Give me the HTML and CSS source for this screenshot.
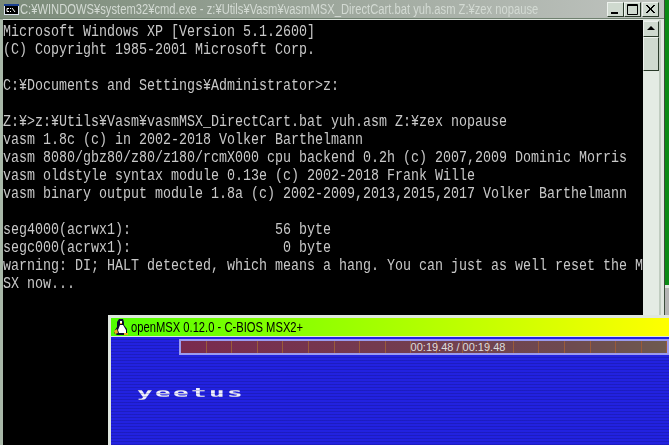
FILE: index.html
```html
<!DOCTYPE html>
<html lang="en">
<head>
<meta charset="utf-8">
<title>cmd and openMSX</title>
<link rel="stylesheet" href="styles.css">
</head>
<body>
<div class="desk">
  <div class="cmd">
    <div class="titlebar">
      <svg class="cmd-icon" width="15" height="11" viewBox="0 0 15 11"><rect width="15" height="11" fill="#dfe6f0"/><rect x="0" y="0" width="15" height="2" fill="#1a3f8f"/><rect x="1" y="2" width="13" height="8" fill="#000"/><path d="M3 4.500h2M3 4.500v3M3 7.500h2M6.500 4v1M6.500 7v1M8 4l3 4" stroke="#fff" fill="none"/></svg>
      <div class="title-text"><span class="title-inner">C:¥WINDOWS¥system32¥cmd.exe - z:¥Utils¥Vasm¥vasmMSX_DirectCart.bat yuh.asm Z:¥zex nopause</span></div>
      <div class="caption-btns">
        <div class="cbtn"><svg width="15" height="13" viewBox="0 0 15 13"><rect x="3" y="9" width="7" height="2" fill="#000"/></svg></div>
        <div class="cbtn"><svg width="15" height="13" viewBox="0 0 15 13"><path d="M2.500 1.500h10v10h-10z M2.500 2.500h10" fill="none" stroke="#000"/></svg></div>
        <div class="cbtn cbtn-close"><svg width="15" height="13" viewBox="0 0 15 13"><path d="M3 2l8 8M4 2l8 8M11 2l-8 8M12 2l-8 8" fill="none" stroke="#000"/></svg></div>
      </div>
    </div>
    <div class="client">
      <div class="console-clip">
      <pre class="console">Microsoft Windows XP [Version 5.1.2600]
(C) Copyright 1985-2001 Microsoft Corp.

C:¥Documents and Settings¥Administrator&gt;z:

Z:¥&gt;z:¥Utils¥Vasm¥vasmMSX_DirectCart.bat yuh.asm Z:¥zex nopause
vasm 1.8c (c) in 2002-2018 Volker Barthelmann
vasm 8080/gbz80/z80/z180/rcmX000 cpu backend 0.2h (c) 2007,2009 Dominic Morris
vasm oldstyle syntax module 0.13e (c) 2002-2018 Frank Wille
vasm binary output module 1.8a (c) 2002-2009,2013,2015,2017 Volker Barthelmann

seg4000(acrwx1):                  56 byte
segc000(acrwx1):                   0 byte
warning: DI; HALT detected, which means a hang. You can just as well reset the M
SX now...</pre>
      </div>
      <div class="scrollbar">
        <div class="sbtn"><svg width="14" height="13" viewBox="0 0 14 13"><path d="M7 4l4 4H3z" fill="#000"/></svg></div>
        <div class="thumb"></div>
      </div>
    </div>
  </div>
  <div class="strip"></div>
  <div class="strip-low"></div>
  <div class="msx">
    <div class="msx-title">
      <svg class="tux" width="14" height="16" viewBox="0 0 14 16"><path d="M5 0h4l1 3v3l3 4v4l-2 2H3L0 14l1-3 2-3V3z" fill="#0a0a30"/><path d="M6 6h3l3 5v3H5l-1-3z" fill="#fff"/><path d="M6 2h2v2H6z" fill="#fff"/><path d="M0 12l3-2 1 4-3 1zM10 14h4v2h-4z" fill="#f0b020"/><path d="M6 4h2v1H6z" fill="#f0b020"/></svg>
      <span class="msx-title-text">openMSX 0.12.0 - C-BIOS MSX2+</span>
    </div>
    <div class="screen">
      <div class="osd"><span class="osd-time">00:19.48 / 00:19.48</span></div>
      <div class="yeetus">yeetus</div>
    </div>
  </div>
</div>
</body>
</html>
```
FILE: styles.css
```css
html, body { margin: 0; padding: 0; background: #000; }
.desk { position: relative; width: 669px; height: 445px; overflow: hidden; background: #000; }
.cmd { position: absolute; left: 0; top: 0; width: 665px; height: 500px; box-sizing: border-box; background: #dfe6df; border-left: 3px solid #a8b8a8; border-right: 1px solid #3c4c3c; display: flex; flex-direction: column; }
.titlebar { margin-left: -3px; height: 18px; display: flex; align-items: center; padding: 0 5px 0 4px; background: linear-gradient(90deg, #7a8a78, #c0c4c0); border-bottom: 1px solid #6f806f; }
.cmd-icon { flex: none; margin-right: 1px; }
.title-text { flex: 1; min-width: 0; height: 18px; overflow: hidden; }
.title-inner { display: block; width: 800px; font: 14px/18px "Liberation Sans", sans-serif; color: #d3dad3; white-space: pre; transform: scaleX(0.8); transform-origin: left center; }
.caption-btns { display: flex; }
.cbtn { width: 15px; height: 13px; background: #cfd9cf; border: 1px solid; border-color: #eef2ee #2a3a2a #2a3a2a #eef2ee; }
.cbtn-close { margin-left: 1px; }
.cbtn svg { display: block; }
.client { flex: 1; display: flex; margin-top: 1px; padding-right: 3px; }
.console-clip { flex: none; width: 640px; height: 440px; overflow: hidden; background: #000; }
.console { margin: 0; width: 768px; padding: 3px 0 0 0; color: #c8c8c8; font: 16px/18px "Liberation Mono", monospace; white-space: pre; transform: scaleX(0.8333); transform-origin: left top; }
.scrollbar { flex: none; width: 16px; background: #e4ebe4; border-right: 2px solid #c0ccc0; padding-top: 1px; }
.sbtn { width: 14px; height: 14px; background: #cfd9cf; border: 1px solid; border-color: #eef2ee #2a3a2a #2a3a2a #eef2ee; }
.sbtn svg { display: block; }
.thumb { height: 32px; width: 14px; background: #cfd9cf; border: 1px solid; border-color: #eef2ee #2a3a2a #2a3a2a #eef2ee; }
.strip { position: absolute; left: 665px; top: 0; width: 4px; height: 285px; background: #0a8a14; }
.strip-low { position: absolute; left: 665px; top: 285px; width: 4px; height: 30px; background: linear-gradient(180deg, #e0e6e0 0, #e0e6e0 3px, #b4b4b4 3px); }
.msx { position: absolute; left: 108px; top: 315px; width: 600px; height: 200px; box-sizing: border-box; border: 3px solid #dfe6df; background: #dfe6df; }
.msx-title { height: 18px; display: flex; align-items: center; gap: 3px; padding-left: 3px; background: linear-gradient(90deg, #50ff00, #ffff00 558px); margin-bottom: 1px; }
.msx-title-text { font: 14px/18px "Liberation Sans", sans-serif; color: #000; white-space: pre; transform: scaleX(0.8); transform-origin: left center; }
.tux { flex: none; }
.screen { position: relative; height: 180px; background: #2222e0; }
.screen::after { content: ""; position: absolute; inset: 0; background: repeating-linear-gradient(180deg, transparent 0, transparent 2px, rgba(10,10,80,0.22) 2px, rgba(10,10,80,0.22) 3px); }
.osd { position: absolute; z-index: 1; left: 68px; top: 2px; width: 490px; height: 16px; box-sizing: border-box; border: 2px solid #9a9af0; background-color: #78304e; background-image: repeating-linear-gradient(90deg, transparent 0, transparent 24.6px, #9a5a3a 24.6px, #9a5a3a 25.6px), linear-gradient(90deg, #7a2a4e, #6e4a50 80%, #6e5a50); }
.osd-time { display: block; width: 246px; margin-left: 154px; text-align: center; color: #ddd; font: 11px/13px "Liberation Sans", sans-serif; white-space: pre; }
.yeetus { position: absolute; left: 26px; top: 48px; color: #f0f0ff; font: bold 13px/16px "DejaVu Sans Mono", monospace; letter-spacing: 1.17px; transform: scaleX(2); transform-origin: left top; filter: blur(0.3px); }
```
